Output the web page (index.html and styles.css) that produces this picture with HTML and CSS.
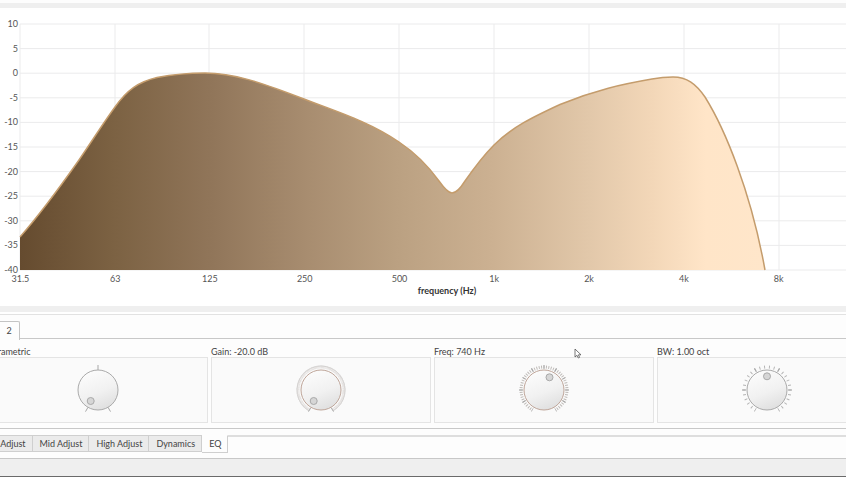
FILE: index.html
```
<!DOCTYPE html>
<html lang="en">
<head>
  <meta charset="UTF-8" />
  <meta name="viewport" content="width=device-width, initial-scale=1.0"/>
  <title>EQ</title>
  <link rel="stylesheet" href="styles.css">
</head>
<body>
  <main>
    <section class="chart">
      <div class="plot-row">
        <div class="axis-title-y">magnitude (dB)</div>
        <div class="axis-y">
          <span>10</span><span>5</span><span>0</span><span>-5</span><span>-10</span><span>-15</span><span>-20</span><span>-25</span><span>-30</span><span>-35</span><span>-40</span>
        </div>
        <svg class="plot" viewBox="0 0 826 246" preserveAspectRatio="none">
          <defs>
            <linearGradient id="fill" gradientUnits="userSpaceOnUse" x1="0" y1="0" x2="745" y2="0">
              <stop offset="0" stop-color="#654b2f"/>
              <stop offset="0.127" stop-color="#7c6243"/>
              <stop offset="0.254" stop-color="#907559"/>
              <stop offset="0.381" stop-color="#a78c6f"/>
              <stop offset="0.509" stop-color="#bba182"/>
              <stop offset="0.636" stop-color="#ccb192"/>
              <stop offset="0.764" stop-color="#e2c8aa"/>
              <stop offset="0.85" stop-color="#f3d7b8"/>
              <stop offset="0.92" stop-color="#ffe5c8"/>
              <stop offset="1" stop-color="#ffe6ca"/>
            </linearGradient>
          </defs>
          <path class="grid" d="M0 0H826M0 24.6H826M0 49.2H826M0 73.8H826M0 98.4H826M0 123H826M0 147.6H826M0 172.2H826M0 196.8H826M0 221.4H826M0 246H826M0 0V246M95 0V246M189 0V246M284 0V246M379 0V246M474 0V246M569 0V246M664 0V246M759 0V246"/>
          <path fill="url(#fill)" d="M0 213C22 188 40 163 59 136C72 117 84 98 95 83C107 66 118 58 137 53.5C150 51 168 49 185 49C213 49 240 58 284 75C318 88 350 98 379 118C397 130 409 143 419 157C424 164 428 169 432 169C436 169 440 165 445 157C452 147 462 133 474 121C492 103 513 93 540 80.5C575 66 603 60 632 55C640 53.5 648 53 653 53C667 53 676 60 685 73C705 105 731 168 745 246H0Z"/>
          <path class="curve" d="M0 213C22 188 40 163 59 136C72 117 84 98 95 83C107 66 118 58 137 53.5C150 51 168 49 185 49C213 49 240 58 284 75C318 88 350 98 379 118C397 130 409 143 419 157C424 164 428 169 432 169C436 169 440 165 445 157C452 147 462 133 474 121C492 103 513 93 540 80.5C575 66 603 60 632 55C640 53.5 648 53 653 53C667 53 676 60 685 73C705 105 731 168 745 246"/>
        </svg>
      </div>
      <div class="axis-x">
        <span>31.5</span><span>63</span><span>125</span><span>250</span><span>500</span><span>1k</span><span>2k</span><span>4k</span><span>8k</span>
      </div>
      <div class="axis-title-x">frequency (Hz)</div>
    </section>

    <section class="controls">
      <div class="band-tabs">
        <button type="button" class="band">2</button>
      </div>
      <div class="knobs">
        <div class="param">
          <label for="type">Parametric</label>
          <div class="knob-box">
            <div class="knob">
              <svg viewBox="0 0 56 56">
                <defs>
                  <linearGradient id="knob" x1="0.3" y1="0" x2="0.7" y2="1">
                    <stop offset="0" stop-color="#fcfcfc"/>
                    <stop offset="0.55" stop-color="#f1f1f1"/>
                    <stop offset="1" stop-color="#dedede"/>
                  </linearGradient>
                </defs>
                <path class="tick" d="M28 3V8M15.5 49.6L18 45.3M40.5 49.6L38 45.3"/>
                <circle class="cap" cx="28" cy="28" r="20"/>
                <circle class="dot" cx="20.7" cy="39" r="3.5"/>
              </svg>
              <input type="range" id="type" min="0" max="2" value="0">
            </div>
          </div>
        </div>
        <div class="param">
          <label for="gain">Gain: -20.0 dB</label>
          <div class="knob-box">
            <div class="knob">
              <svg viewBox="0 0 56 56">
                <path class="ring" d="M16 48.8A24 24 0 1 1 40 48.8"/>
                <path class="tick fine" pathLength="100" d="M16.5 47.9A23 23 0 1 1 39.5 47.9"/>
                <path class="tick" d="M15.5 49.6L17.8 45.7M40.5 49.6L38.2 45.7"/>
                <circle class="cap warm" cx="28" cy="28" r="20"/>
                <circle class="dot" cx="20.7" cy="39" r="3.5"/>
              </svg>
              <input type="range" id="gain" min="-20" max="20" value="-20">
            </div>
          </div>
        </div>
        <div class="param">
          <label for="freq">Freq: 740 Hz</label>
          <div class="knob-box">
            <div class="knob">
              <svg viewBox="0 0 56 56">
                <path class="tick mid" pathLength="100" d="M16.5 47.9A23 23 0 1 1 39.5 47.9"/>
                <path class="tick major" pathLength="100" d="M16.5 47.9A23 23 0 1 1 39.5 47.9"/>
                <circle class="cap warm" cx="28" cy="28" r="20"/>
                <circle class="dot" cx="33.5" cy="15.3" r="3.5"/>
              </svg>
              <input type="range" id="freq" min="20" max="20000" value="740">
            </div>
          </div>
        </div>
        <div class="param">
          <label for="bw">BW: 1.00 oct</label>
          <div class="knob-box">
            <div class="knob">
              <svg viewBox="0 0 56 56">
                <path class="tick coarse" pathLength="100" d="M16.5 47.9A23 23 0 1 1 39.5 47.9"/>
                <path class="tick fifth" pathLength="100" d="M16.5 47.9A23 23 0 1 1 39.5 47.9"/>
                <circle class="cap" cx="28" cy="28" r="20"/>
                <circle class="dot" cx="28" cy="14.3" r="3.5"/>
              </svg>
              <input type="range" id="bw" min="0" max="2" step="0.01" value="1">
            </div>
          </div>
        </div>
      </div>
      <nav class="tabs">
        <button type="button">Low Adjust</button>
        <button type="button">Mid Adjust</button>
        <button type="button">High Adjust</button>
        <button type="button">Dynamics</button>
        <button type="button" class="active">EQ</button>
      </nav>
    </section>
  </main>
  <footer></footer>

  <svg class="cursor" viewBox="0 0 8 11">
    <path d="M1 1V9L3 7.3L4.3 10L5.6 9.4L4.4 6.8H7Z"/>
  </svg>
</body>
</html>
```
FILE: styles.css
```
* {
  box-sizing: border-box;
}
body {
  margin: 0;
  min-height: 100vh;
  display: flex;
  flex-direction: column;
  position: relative;
  overflow: hidden;
  background: #efefef;
  color: #444;
  font-family: Lato, "Open Sans", sans-serif;
  font-size: 9px;
  line-height: 12px;
}
main {
  border-top: 3px solid #fdfdfd;
}
button {
  font: inherit;
  color: inherit;
  margin: 0;
  white-space: nowrap;
}

/* chart */
.chart {
  margin-top: 5px;
  padding: 10px 0 9px;
  background: #fff;
}
.plot-row {
  display: flex;
  position: relative;
}
.axis-y {
  width: 20px;
  padding-right: 2px;
  display: flex;
  flex-direction: column;
  justify-content: space-between;
  text-align: right;
  color: #555;
}
.plot {
  flex: 1;
  min-width: 0;
  height: 246px;
  margin: 6px 0;
  overflow: visible;
}
.grid {
  fill: none;
  stroke: #ebebec;
  stroke-width: 1;
  vector-effect: non-scaling-stroke;
}
.curve {
  fill: none;
  stroke: #c49c6c;
  stroke-width: 1.5;
  vector-effect: non-scaling-stroke;
}
.axis-title-y {
  position: absolute;
  left: -11px;
  top: 97px;
  writing-mode: vertical-rl;
  transform: rotate(180deg);
  font-weight: bold;
  color: #333;
}
.axis-x {
  display: grid;
  grid-template-columns: repeat(9, 1fr);
  margin: -3px 20px 0 -27px;
  text-align: center;
  color: #555;
}
.axis-title-x {
  padding-left: 48px;
  text-align: center;
  font-weight: bold;
  color: #333;
}

/* controls */
.controls {
  margin-top: 6px;
  border-top: 2px solid #fff;
  background: #fdfdfd;
  border-bottom: 1px solid #c8c8c8;
}
.band-tabs {
  height: 25px;
  padding-top: 6px;
  border-top: 1px solid #e2e2e2;
  border-bottom: 1px solid #c8c8c8;
}
.band {
  display: block;
  width: 22px;
  height: 19px;
  margin-left: -2px;
  padding: 0;
  border: 1px solid #c4c4c4;
  border-bottom: none;
  border-radius: 2px 2px 0 0;
  background: #fdfdfd;
}
.knobs {
  display: grid;
  grid-template-columns: repeat(4, 1fr);
  gap: 3px;
  margin: 0 -31px 0 -12px;
  padding: 7px 0 5px;
}
.param label {
  display: block;
  height: 11px;
}
.knob-box {
  height: 66px;
  border: 1px solid #e4e4e4;
  background: #fafafa;
  display: flex;
  justify-content: center;
  align-items: center;
}
.knob {
  position: relative;
  width: 56px;
  height: 56px;
}
.knob svg {
  display: block;
  width: 56px;
  height: 56px;
}
.knob input {
  position: absolute;
  inset: 0;
  width: 100%;
  height: 100%;
  margin: 0;
  opacity: 0;
}
.cap {
  fill: url(#knob);
  stroke: #aaa;
}
.warm {
  stroke: #bfa69a;
}
.dot {
  fill: #d6d6d6;
  stroke: #a9a9a9;
}
.ring {
  fill: none;
  stroke: #c9c9c9;
  stroke-width: 1;
}
.tick {
  fill: none;
  stroke: #a8a8a8;
  stroke-width: 1;
}
/* dials are 300deg arcs split in dashes, pathLength 100 */
.fine {
  stroke: #dedad8;
  stroke-width: 3;
  stroke-dasharray: 0.6 0.4;
}
.mid {
  stroke: #bdb9b6;
  stroke-width: 3;
  stroke-dasharray: 0.8 1.2;
  stroke-dashoffset: 0.4;
}
.major {
  stroke-width: 4;
  stroke-dasharray: 0.8 9.2;
  stroke-dashoffset: 0.4;
}
.coarse {
  stroke: #b4b4b4;
  stroke-width: 3;
  stroke-dasharray: 0.8 3.2;
  stroke-dashoffset: 0.4;
}
.fifth {
  stroke-width: 4;
  stroke-dasharray: 0.8 19.2;
  stroke-dashoffset: 0.4;
}

/* bottom tabs */
.tabs {
  display: flex;
  align-items: flex-start;
  height: 30px;
  margin-left: -25px;
  border-top: 1px solid #c8c8c8;
  padding-top: 6px;
  background: linear-gradient(#dedede, #dedede) 0 6px / 100% 2px no-repeat;
}
.tabs button {
  height: 17px;
  padding: 0 6px 0 7px;
  border: 1px solid #cfcfcf;
  border-left: none;
  background: #ebebeb;
}
.tabs .active {
  height: 18px;
  border-top-color: #fdfdfd;
  background: #fdfdfd;
}

footer {
  flex: 1;
  border-bottom: 1px solid #6a6a6a;
}
.cursor {
  position: absolute;
  left: 574px;
  top: 348px;
  width: 8px;
  height: 11px;
}
.cursor path {
  fill: #fff;
  stroke: #555;
  stroke-width: 0.8;
}
```
